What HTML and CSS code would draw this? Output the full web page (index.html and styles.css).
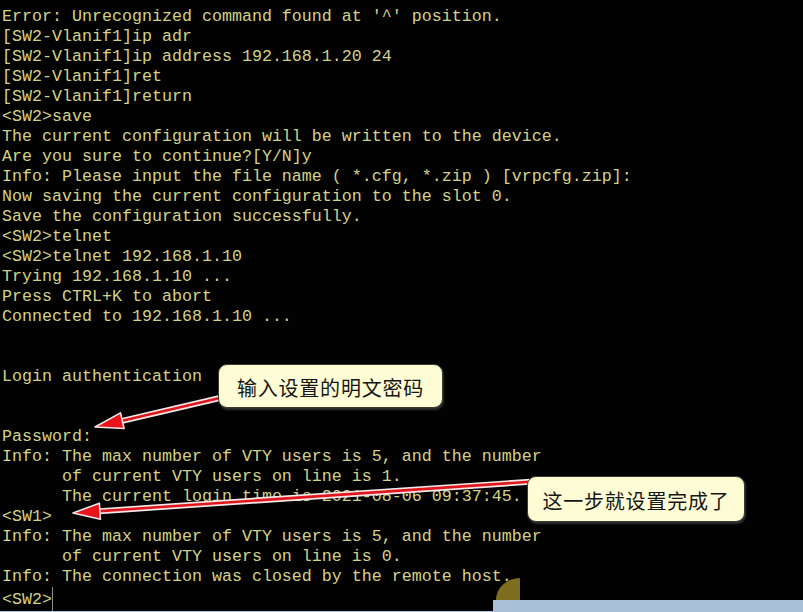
FILE: index.html
```html
<!DOCTYPE html>
<html lang="zh">
<head>
<meta charset="utf-8">
<title>Terminal</title>
<link rel="stylesheet" href="styles.css">
</head>
<body>
<div class="screen">
<div class="term">
<div class="ln">Error: Unrecognized command found at '^' position.</div>
<div class="ln">[SW2-Vlanif1]ip adr</div>
<div class="ln">[SW2-Vlanif1]ip address 192.168.1.20 24</div>
<div class="ln">[SW2-Vlanif1]ret</div>
<div class="ln">[SW2-Vlanif1]return</div>
<div class="ln">&lt;SW2&gt;save</div>
<div class="ln">The current configuration will be written to the device.</div>
<div class="ln">Are you sure to continue?[Y/N]y</div>
<div class="ln">Info: Please input the file name ( *.cfg, *.zip ) [vrpcfg.zip]:</div>
<div class="ln">Now saving the current configuration to the slot 0.</div>
<div class="ln">Save the configuration successfully.</div>
<div class="ln">&lt;SW2&gt;telnet</div>
<div class="ln">&lt;SW2&gt;telnet 192.168.1.10</div>
<div class="ln">Trying 192.168.1.10 ...</div>
<div class="ln">Press CTRL+K to abort</div>
<div class="ln">Connected to 192.168.1.10 ...</div>
<div class="ln"></div>
<div class="ln"></div>
<div class="ln">Login authentication</div>
<div class="ln"></div>
<div class="ln"></div>
<div class="ln">Password:</div>
<div class="ln">Info: The max number of VTY users is 5, and the number</div>
<div class="ln">      of current VTY users on line is 1.</div>
<div class="ln">      The current login time is 2021-08-06 09:37:45.</div>
<div class="ln">&lt;SW1&gt;</div>
<div class="ln">Info: The max number of VTY users is 5, and the number</div>
<div class="ln">      of current VTY users on line is 0.</div>
<div class="ln">Info: The connection was closed by the remote host.</div>
<div class="ln">&lt;SW2&gt;<span class="cursor"></span></div>
</div>
<div class="taskbar"></div>
<div class="blob"></div>
<div class="tab"></div>
<svg class="arrows" width="803" height="612" viewBox="0 0 803 612">
  <g class="arrow">
    <line x1="222" y1="397.5" x2="118" y2="421.8" class="shaft-outer"/>
    <line x1="222" y1="397.5" x2="118" y2="421.8" class="shaft-inner"/>
    <polygon points="95,427 120.5,412.9 124.1,428.5" class="head"/>
  </g>
  <g class="arrow">
    <line x1="530" y1="481.8" x2="96" y2="511.4" class="shaft-outer"/>
    <line x1="530" y1="481.8" x2="96" y2="511.4" class="shaft-inner"/>
    <polygon points="73,513 99.4,503.2 100.4,519.2" class="head"/>
  </g>
</svg>
<div class="callout callout-1">输入设置的明文密码</div>
<div class="callout callout-2">这一步就设置完成了</div>
</div>
</body>
</html>
```
FILE: styles.css
```css
html, body {
  margin: 0;
  padding: 0;
  background: #000;
}
.screen {
  position: relative;
  width: 803px;
  height: 612px;
  overflow: hidden;
  display: flex;
  flex-direction: column;
  background: #020202;
}
.term {
  flex: 1;
  margin: 0;
  padding: 7px 0 0 2px;
  font-family: "Liberation Mono", "Courier New", monospace;
  font-size: 16.67px;
  line-height: 20px;
  color: #d2d28a;
}
.ln {
  white-space: pre;
  width: max-content;
  min-height: 20px;
}
.cursor {
  display: inline-block;
  width: 0;
  height: 24px;
  border-left: 1px solid #8c8c8c;
  vertical-align: -7px;
}
.taskbar {
  height: 3px;
  background: #a9c1d8;
}
.tab {
  position: absolute;
  left: 493px;
  top: 600px;
  right: 0;
  bottom: 0;
  background: #a9c1d8;
}
.blob {
  position: absolute;
  left: 496px;
  top: 578px;
  width: 24px;
  height: 22px;
  border-top-left-radius: 24px 22px;
  background: #7c6d1f;
}
.arrows {
  position: absolute;
  left: 0;
  top: 0;
}
.shaft-outer {
  stroke: #f4e6e6;
  stroke-width: 6;
}
.shaft-inner {
  stroke: #e0161c;
  stroke-width: 2.6;
}
.head {
  fill: #e8141a;
  stroke: #f2e4e8;
  stroke-width: 1.6;
  stroke-linejoin: round;
}
.callout {
  position: absolute;
  box-sizing: border-box;
  display: flex;
  align-items: center;
  justify-content: center;
  background: #fdfcd4;
  border: 1px solid #3a3a30;
  border-radius: 9px;
  box-shadow: 1px 2px 2px rgba(60, 60, 60, 0.8);
  font-family: "Noto Sans CJK SC", "Noto Sans", sans-serif;
  font-size: 20px;
  letter-spacing: 0.8px;
  color: #161616;
  padding-top: 3px;
}
.callout-1 {
  left: 218px;
  top: 364px;
  width: 225px;
  height: 44px;
}
.callout-2 {
  left: 527px;
  top: 476px;
  width: 218px;
  height: 46px;
}
```
